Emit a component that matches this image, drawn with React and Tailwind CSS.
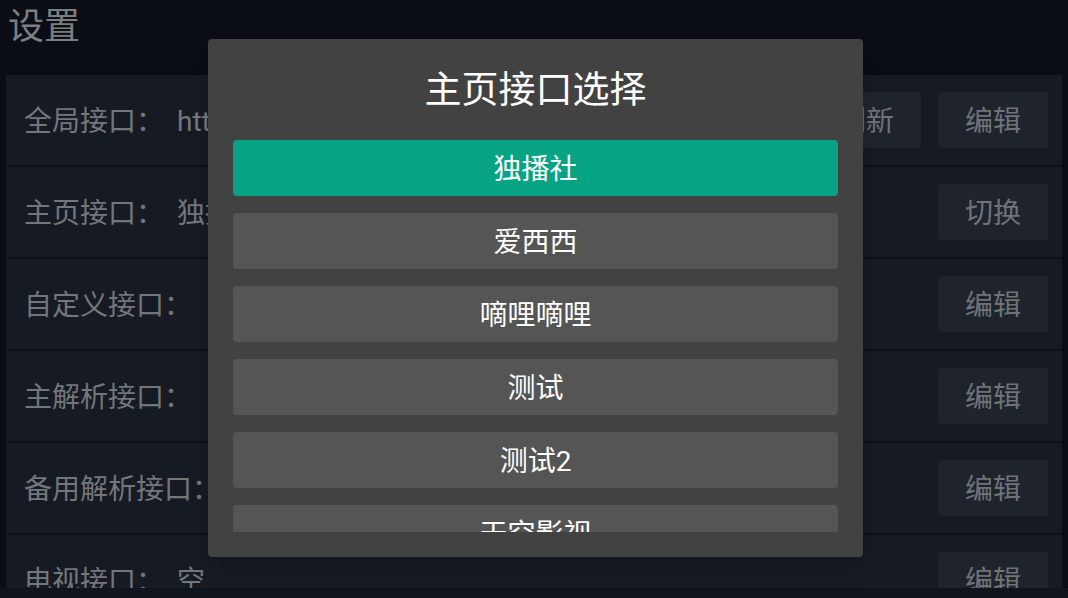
import { useState } from 'react';

const rows = [
  { label: '全局接口：', value: 'https://api.example.com/config.json', buttons: ['刷新', '编辑'] },
  { label: '主页接口：', value: '独播社', buttons: ['切换'] },
  { label: '自定义接口：', value: '', buttons: ['编辑'] },
  { label: '主解析接口：', value: '', buttons: ['编辑'] },
  { label: '备用解析接口：', value: '', buttons: ['编辑'] },
  { label: '电视接口：', value: '空', buttons: ['编辑'] },
];

const sources = ['独播社', '爱西西', '嘀哩嘀哩', '测试', '测试2', '天空影视', '备用源'];

const font = { fontFamily: "Roboto, 'Noto Sans CJK SC', sans-serif" };

const SettingRow = ({ row }) => (
  <div className="h-[92px] shrink-0 flex items-start bg-[#161b23] border-b-2 border-[#0e1218]">
    <div className="flex-1 flex items-center h-[90px] pl-[18px] pt-[3px] min-w-0">
      <span className="text-[28px] text-[#73767a] whitespace-nowrap">{row.label}</span>
      <span className="ml-[13px] text-[28px] text-[#73767a] whitespace-nowrap overflow-hidden">{row.value}</span>
    </div>
    <div className="flex gap-[17px] pt-[17px] pr-[14px] shrink-0">
      {row.buttons.map(b => (
        <button key={b} className="w-[110px] h-[56px] pt-[3px] rounded bg-[#1f242c] text-[28px] text-[#6f7378]">{b}</button>
      ))}
    </div>
  </div>
);

export default function App() {
  const [selected, setSelected] = useState(0);

  return (
    <div className="relative w-[1068px] h-[598px] overflow-hidden bg-[#0a0d14] flex flex-col" style={font}>
      <div className="h-[75px] shrink-0 px-[8px] pt-[1px]">
        <h1 className="text-[36px] leading-[52px] text-[#7b7d80]">设置</h1>
      </div>

      <div className="h-[513px] shrink-0 mx-[6px] overflow-hidden flex flex-col">
        {rows.map(r => <SettingRow key={r.label} row={r} />)}
      </div>
      <div className="flex-1 bg-[#10151d]" />

      {/* HOME SOURCE PICKER */}
      <div className="absolute left-[208px] top-[39px] w-[655px] h-[518px] bg-[#424242] rounded-sm shadow-xl flex flex-col">
        <div className="h-[101px] shrink-0 flex items-center justify-center pt-[2px]">
          <h2 className="text-[37px] text-white">主页接口选择</h2>
        </div>
        <div className="mx-[25px] h-[392px] overflow-hidden flex flex-col gap-[17px]">
          {sources.map((s, i) => (
            <button
              key={s}
              onClick={() => setSelected(i)}
              className={`h-[56px] shrink-0 pt-[3px] rounded text-[28px] text-white ${selected === i ? 'bg-[#06a385]' : 'bg-[#555555]'}`}
            >
              {s}
            </button>
          ))}
        </div>
      </div>
    </div>
  );
}
